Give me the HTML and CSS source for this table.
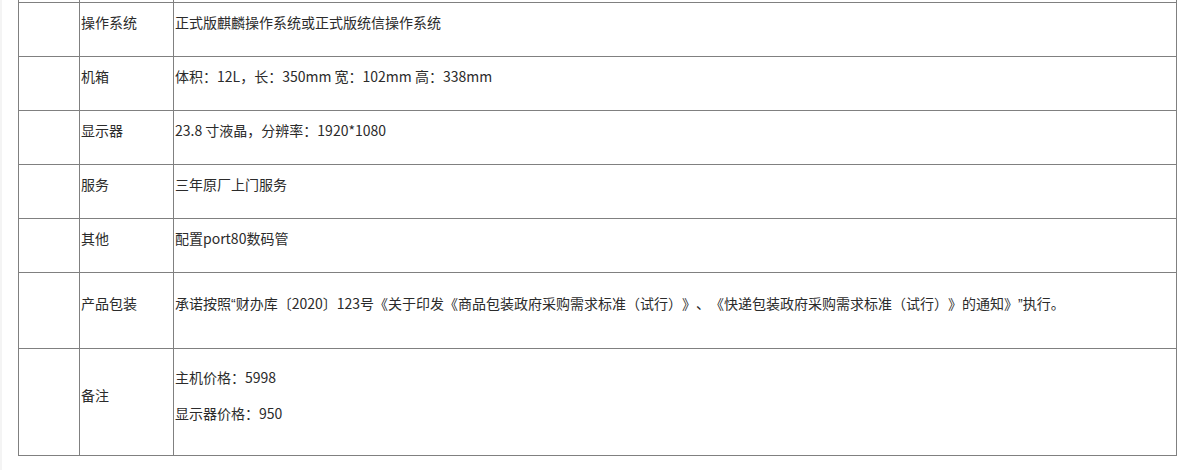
FILE: index.html
```html
<!DOCTYPE html>
<html lang="zh-CN">
<head>
<meta charset="utf-8">
<title>配置表</title>
<link rel="stylesheet" href="styles.css">
</head>
<body>
<div class="page">
  <table class="spec">
    <colgroup>
      <col class="c-blank">
      <col class="c-label">
      <col class="c-value">
    </colgroup>
    <tbody>
      <tr class="r-prev"><td></td><td></td><td></td></tr>
      <tr class="r-std"><td></td><td>操作系统</td><td>正式版麒麟操作系统或正式版统信操作系统</td></tr>
      <tr class="r-std"><td></td><td>机箱</td><td>体积：12L，长：350mm 宽：102mm 高：338mm</td></tr>
      <tr class="r-std"><td></td><td>显示器</td><td>23.8 寸液晶，分辨率：1920*1080</td></tr>
      <tr class="r-std"><td></td><td>服务</td><td>三年原厂上门服务</td></tr>
      <tr class="r-std"><td></td><td>其他</td><td>配置port80数码管</td></tr>
      <tr class="r-mid"><td></td><td>产品包装</td><td>承诺按照<span class="q">“</span>财办库〔2020〕123号《关于印发《商品包装政府采购需求标准（试行）》、《快递包装政府采购需求标准（试行）》的通知》<span class="q">”</span>执行。</td></tr>
      <tr class="r-tall"><td></td><td>备注</td><td><p class="line">主机价格：5998</p><p class="line">显示器价格：950</p></td></tr>
    </tbody>
  </table>
</div>
</body>
</html>
```

FILE: styles.css
```css
html, body {
  margin: 0;
  padding: 0;
  background: #ffffff;
}

.page {
  height: 470px;
  overflow: hidden;
  border-left: 2px solid #f4f4f4;
  padding-left: 16px;
  box-sizing: border-box;
}

.spec {
  border-collapse: collapse;
  table-layout: fixed;
  width: 1158px;
  margin-top: -52px;
  font-family: "Microsoft YaHei", "Noto Sans CJK SC", "Noto Sans", sans-serif;
  font-size: 14px;
  line-height: 20px;
  color: #2b2b2b;
  text-spacing-trim: space-all;
}

.c-blank { width: 61px; }
.c-label { width: 94px; }
.c-value { width: 1003px; }

.spec td {
  border: 1px solid #808080;
  padding: 0 1px 15px 1px;
  vertical-align: middle;
  white-space: nowrap;
}

.r-prev { height: 54px; }
.r-std { height: 54px; }
.r-mid { height: 76px; }
.r-tall { height: 107px; }

.q {
  font-family: "Liberation Sans", sans-serif;
}

.line {
  margin: 0;
}

.line + .line {
  margin-top: 16px;
}
```
